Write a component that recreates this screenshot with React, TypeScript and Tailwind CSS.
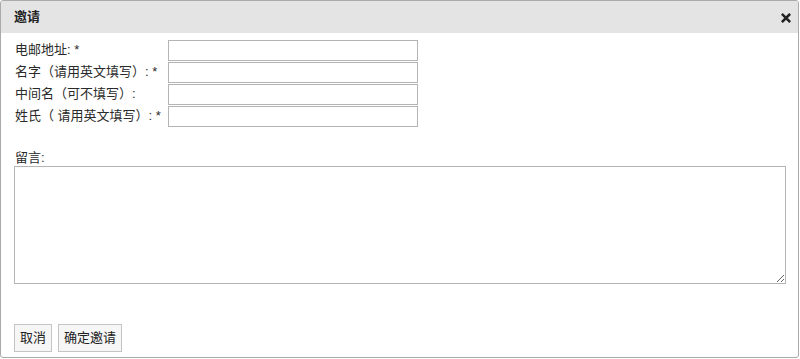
import React from 'react';

const font = { fontFamily: '"Liberation Sans", "Noto Sans CJK SC", sans-serif' };

function FieldRow({ label, id }: { label: string; id: string }) {
  return (
    <div className="flex h-[22px] items-center">
      <label htmlFor={id} className="w-[154px] shrink-0 whitespace-nowrap pl-[1px] text-[13px] text-[#2a2a2a]">
        {label}
      </label>
      <input
        id={id}
        type="text"
        className="box-border h-[21px] w-[250px] border border-[#b4b4b4] bg-white px-1 text-[12px] outline-none"
      />
    </div>
  );
}

function CloseIcon() {
  return (
    <svg width="10" height="10" viewBox="0 0 10 10" className="block">
      <path d="M1.8 1.8 L8.2 8.2 M8.2 1.8 L1.8 8.2" stroke="#222" strokeWidth="2.6" strokeLinecap="square" />
    </svg>
  );
}

export default function App() {
  return (
    <div className="h-[359px] w-[800px] bg-white" style={font}>
      <div className="box-border flex h-[358px] w-[799px] flex-col overflow-hidden rounded-[3px] border border-[#aaaaaa] bg-white">
        <div className="flex h-[32px] shrink-0 items-center justify-between bg-[#e4e4e4] pl-[13px] pr-[4px]">
          <span className="text-[13px] font-bold text-[#222]">邀请</span>
          <button type="button" className="flex h-[16px] w-[16px] items-center justify-center pt-[2px]">
            <CloseIcon />
          </button>
        </div>
        <div className="flex flex-1 flex-col px-[13px] pt-[6px]">
          <div className="flex flex-col">
            <FieldRow id="email" label="电邮地址: *" />
            <FieldRow id="first" label="名字（请用英文填写）: *" />
            <FieldRow id="middle" label="中间名（可不填写）:" />
            <FieldRow id="last" label="姓氏（ 请用英文填写）: *" />
          </div>
          <label htmlFor="msg" className="mt-[23px] h-[16px] pl-[1px] text-[13px] leading-[16px] text-[#2a2a2a]">
            留言:
          </label>
          <textarea
            id="msg"
            className="box-border h-[118px] w-[772px] resize border border-[#b4b4b4] bg-white p-1 text-[12px] outline-none"
          />
          <div className="mt-[40px] flex gap-[6px]">
            <button
              type="button"
              className="box-border h-[28px] border border-[#c4c4c4] bg-[#f6f6f6] px-[5px] text-[13px] text-[#222]"
            >
              取消
            </button>
            <button
              type="button"
              className="box-border h-[28px] border border-[#c4c4c4] bg-[#f6f6f6] px-[5px] text-[13px] text-[#222]"
            >
              确定邀请
            </button>
          </div>
        </div>
      </div>
    </div>
  );
}
